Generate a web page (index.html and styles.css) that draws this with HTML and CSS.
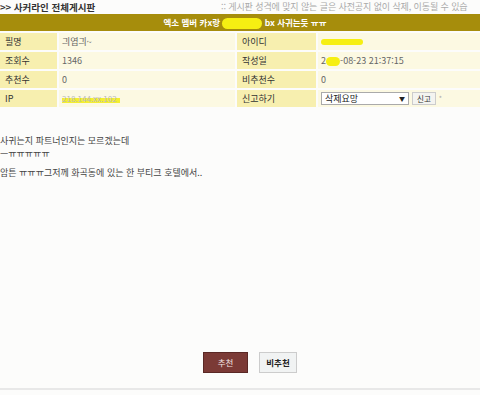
FILE: index.html
```html
<!DOCTYPE html>
<html lang="ko">
<head>
	<meta charset="UTF-8">
	<title>사커라인 전체게시판</title>
	<link rel="stylesheet" href="styles.css">
</head>
<body>
	<div id="board">
		<div class="top">
			<span class="boardName">&gt;&gt; 사커라인 전체게시판</span>
			<span class="notice">:: 게시판 성격에 맞지 않는 글은 사전공지 없이 삭제, 이동될 수 있습</span>
		</div>
		<div class="info">
			<div class="subject">엑소 멤버 카x랑 <span class="mark wide"></span> bx 사귀는듯 ㅠㅠ</div>
			<div class="lbl">필명</div>
			<div class="val">긔엽긔~</div>
			<div class="lbl">아이디</div>
			<div class="val"><span class="mark id"></span></div>
			<div class="lbl">조회수</div>
			<div class="val">1346</div>
			<div class="lbl">작성일</div>
			<div class="val">2<span class="mark yr"></span>-08-23 21:37:15</div>
			<div class="lbl">추천수</div>
			<div class="val">0</div>
			<div class="lbl">비추천수</div>
			<div class="val">0</div>
			<div class="lbl">IP</div>
			<div class="val"><span class="ip">218.144.xx.102</span></div>
			<div class="lbl">신고하기</div>
			<div class="val report">
				<span class="select">삭제요망<i>▼</i></span>
				<span class="btnSmall">신고</span>
				<span class="star">*</span>
			</div>
		</div>
		<div class="content">
			<p>사귀는지 파트너인지는 모르겠는데<br>ㅡㅠㅠㅠㅠㅠ</p>
			<p>암튼 ㅠㅠㅠ그저께 화곡동에 있는 한 부티크 호텔에서..</p>
		</div>
		<div class="vote">
			<span class="btn up">추천</span>
			<span class="btn down">비추천</span>
		</div>
	</div>
</body>
</html>
```

FILE: styles.css
```css
*{
	padding:0;
	margin:0;
}
body{
	background:#fcfcfb;
	font-family:"Noto Sans CJK KR","Liberation Sans",sans-serif;
	font-size:9px;
	color:#555;
	width:480px;
	overflow:hidden;
}
#board{
	width:480px;
}
.top{
	height:14px;
	line-height:14px;
	display:flex;
	white-space:nowrap;
	overflow:hidden;
}
.boardName{
	font-weight:bold;
	color:#333;
	font-size:9.5px;
	width:221px;
	flex-shrink:0;
}
.notice{
	color:#aaa;
	font-size:9px;
	letter-spacing:-0.1px;
}
.info{
	display:grid;
	grid-template-columns:57px 176px 79px 1fr;
	grid-auto-rows:17px;
	gap:2px;
}
.subject{
	grid-column:1 / 5;
	background:#a68d0c;
	color:#fff;
	font-weight:bold;
	text-align:center;
	line-height:17px;
	font-size:8.5px;
	height:17px;
	padding-left:10px;
}
.lbl{
	background:#f7efaf;
	color:#333;
	padding-left:5px;
	line-height:17px;
}
.val{
	background:#fcf9e2;
	padding-left:3px;
	line-height:17px;
	color:#666;
}
.mark{
	display:inline-block;
	background:#f6ef12;
	border-radius:6px;
	vertical-align:middle;
}
.mark.wide{
	width:40px;
	height:11px;
}
.mark.id{
	width:42px;
	height:6px;
	margin-top:-2px;
}
.mark.yr{
	width:14px;
	height:9px;
}
.ip{
	display:inline-block;
	color:#bbb;
	background:linear-gradient(transparent 50%,#f4ee30 50%,#f4ee30 75%,transparent 75%);
	width:58px;
	overflow:hidden;
	white-space:nowrap;
	font-size:8px;
}
.report{
	display:flex;
	align-items:center;
}
.select{
	display:flex;
	justify-content:space-between;
	align-items:center;
	width:80px;
	height:11px;
	padding:0 3px;
	background:#fff;
	border:1px solid #aaa;
	color:#222;
	line-height:11px;
}
.select i{
	font-style:normal;
	font-size:6px;
}
.btnSmall{
	margin-left:3px;
	height:11px;
	line-height:11px;
	padding:0 4px;
	background:#f4f4f0;
	border:1px solid #ccc;
	font-size:7.5px;
	color:#333;
}
.star{
	margin-left:3px;
	color:#aaa;
	font-size:7px;
}
.content{
	margin-top:27px;
	color:#444;
	line-height:13px;
}
.content p{
	margin-bottom:6px;
}
.vote{
	display:flex;
	justify-content:center;
	gap:11px;
	margin-top:173px;
	padding-left:20px;
	padding-bottom:15px;
	border-bottom:2px solid #e8e8e8;
}
.btn{
	display:inline-block;
	height:19px;
	line-height:19px;
	text-align:center;
	font-size:8.5px;
}
.up{
	width:43px;
	background:#7b3a36;
	color:#f3e4e2;
	border:1px solid #5a2825;
}
.down{
	width:36px;
	background:#f1f3f3;
	border:1px solid #ccc;
	color:#222;
	font-weight:bold;
}
```
